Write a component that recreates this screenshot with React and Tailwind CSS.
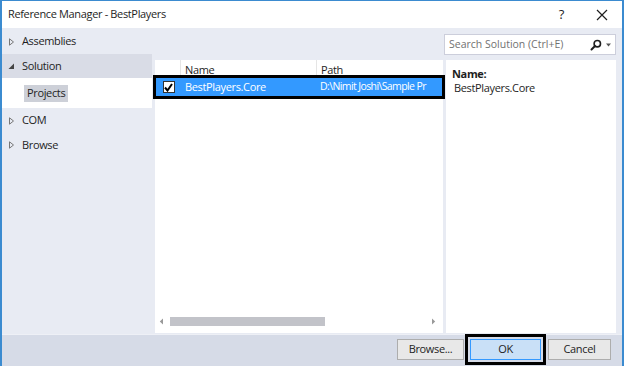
const NavItem = ({ label, open, selected, h }) => (
  <div className={`flex items-center pl-[6px] ${h} ${selected ? "bg-[#d9dce6]" : ""}`}>
    {open ? (
      <svg width="7" height="7" viewBox="0 0 7 7" className="mr-[7px]">
        <path d="M6 0.5 L6 6 L0.5 6 Z" fill="#444" />
      </svg>
    ) : (
      <svg width="7" height="8" viewBox="0 0 7 8" className="mr-[7px]">
        <path d="M1.5 0.8 L5.5 4 L1.5 7.2 Z" fill="none" stroke="#777" strokeWidth="1" />
      </svg>
    )}
    <span className="text-[#1e1e1e]">{label}</span>
  </div>
);

const Btn = ({ children, primary, w }) => (
  <button
    className={`h-[21px] ${w} border text-[#1e1e1e] ${
      primary
        ? "bg-[#c9e0f7] border-[#3399ff] outline-[3px] outline-black outline-offset-[2px]"
        : "bg-[#e8e8e8] border-[#adadad]"
    }`}
  >
    {children}
  </button>
);

export default function App() {
  return (
    <div
      className="w-[624px] h-[366px] flex flex-col border-x-2 border-t border-[#3b8bd0] bg-[#e8ebf3] text-[11px] tracking-[-0.35px] overflow-hidden"
      style={{ fontFamily: '"Open Sans", "Noto Sans", sans-serif' }}
    >
      {/* title bar */}
      <div className="h-[27px] bg-white flex items-center shrink-0 pl-[6px] pr-[14px]">
        <span className="text-[#1e1e1e] text-[11px]">Reference Manager - BestPlayers</span>
        <span className="ml-auto text-[#1e1e1e] text-[13px] mr-[32px]">?</span>
        <svg width="12" height="12" viewBox="0 0 12 12">
          <path d="M1 1 L11 11 M11 1 L1 11" stroke="#1e1e1e" strokeWidth="1.2" />
        </svg>
      </div>

      {/* body */}
      <div className="flex-1 flex">
        {/* left nav */}
        <div className="w-[150px] flex flex-col pt-[1px]">
          <NavItem label="Assemblies" h="h-[25px]" />
          <NavItem label="Solution" open selected h="h-[24px]" />
          <div className="h-[30px] bg-white flex items-center pl-[22px]">
            <span className="bg-[#cdd0d8] px-[3px] h-[17px] flex items-center text-[#1e1e1e]">Projects</span>
          </div>
          <NavItem label="COM" h="h-[25px]" />
          <NavItem label="Browse" h="h-[24px]" />
        </div>

        {/* main area */}
        <div className="flex-1 flex flex-col pl-[3px] pr-[6px] pb-[1px]">
          <div className="h-[32px] flex justify-end items-start pt-[6px]">
            <div className="w-[172px] h-[21px] bg-white border border-[#cccedb] flex items-center pl-[4px] pr-[3px] tracking-normal">
              <span className="text-[#717171] text-[10.5px]">Search Solution (Ctrl+E)</span>
              <svg width="12" height="12" viewBox="0 0 12 12" className="ml-auto">
                <circle cx="7.3" cy="4.7" r="3.2" fill="none" stroke="#1e1e1e" strokeWidth="1.6" />
                <path d="M5 7 L1.5 10.5" stroke="#1e1e1e" strokeWidth="2" strokeLinecap="round" />
              </svg>
              <svg width="7" height="4" viewBox="0 0 7 4" className="ml-[3px]">
                <path d="M1 0.5 L6 0.5 L3.5 3.5 Z" fill="#555" />
              </svg>
            </div>
          </div>

          <div className="flex-1 flex gap-[3px]">
            {/* list */}
            <div className="w-[288px] bg-white flex flex-col">
              <div className="h-[18px] flex text-[#1e1e1e] shrink-0">
                <div className="w-[25px]" />
                <div className="w-[136px] border-l border-[#e5e5e5] pl-[4px] pt-[2px] flex items-center">Name</div>
                <div className="flex-1 border-l border-[#e5e5e5] pl-[4px] pt-[2px] flex items-center">Path</div>
              </div>
              <div className="mx-[1px] h-[18px] bg-[#3399ff] flex items-center text-white outline-[3px] outline-black whitespace-nowrap overflow-hidden">
                <div className="w-[24px] flex justify-center pl-[1px]">
                  <div className="w-[12px] h-[12px] bg-white border border-[#333] flex items-center justify-center">
                    <svg width="9" height="9" viewBox="0 0 9 9">
                      <path d="M1 4.5 L3.5 7.5 L8 1" fill="none" stroke="#000" strokeWidth="2" />
                    </svg>
                  </div>
                </div>
                <div className="w-[136px] pl-[5px]">BestPlayers.Core</div>
                <div className="w-[118px] pl-[4px] tracking-[-0.6px] text-[10.5px]">D:\Nimit Joshi\Sample Pr</div>
              </div>
              <div className="flex-1" />
              <div className="h-[12px] mb-[6px] flex items-center px-[4px]">
                <svg width="5" height="7" viewBox="0 0 5 7">
                  <path d="M4 0.5 L0.8 3.5 L4 6.5 Z" fill="#999" />
                </svg>
                <div className="ml-[6px] w-[155px] h-[9px] bg-[#c2c3c9]" />
                <svg width="5" height="7" viewBox="0 0 5 7" className="ml-auto mr-[3px]">
                  <path d="M1 0.5 L4.2 3.5 L1 6.5 Z" fill="#999" />
                </svg>
              </div>
            </div>

            {/* detail */}
            <div className="flex-1 bg-white pl-[6px] pt-[7px] text-[#1e1e1e] leading-[14px]">
              <div className="font-bold">Name:</div>
              <div className="pl-[2px]">BestPlayers.Core</div>
            </div>
          </div>
        </div>
      </div>

      {/* footer */}
      <div className="h-[32px] shrink-0 bg-[#d6dbe7] border-t border-[#eef0f6] flex items-start pt-[4px] justify-end pr-[11px]">
        <Btn w="w-[67px]">Browse...</Btn>
        <div className="w-[6px]" />
        <Btn primary w="w-[71px]">OK</Btn>
        <div className="w-[7px]" />
        <Btn w="w-[63px]">Cancel</Btn>
      </div>
    </div>
  );
}
